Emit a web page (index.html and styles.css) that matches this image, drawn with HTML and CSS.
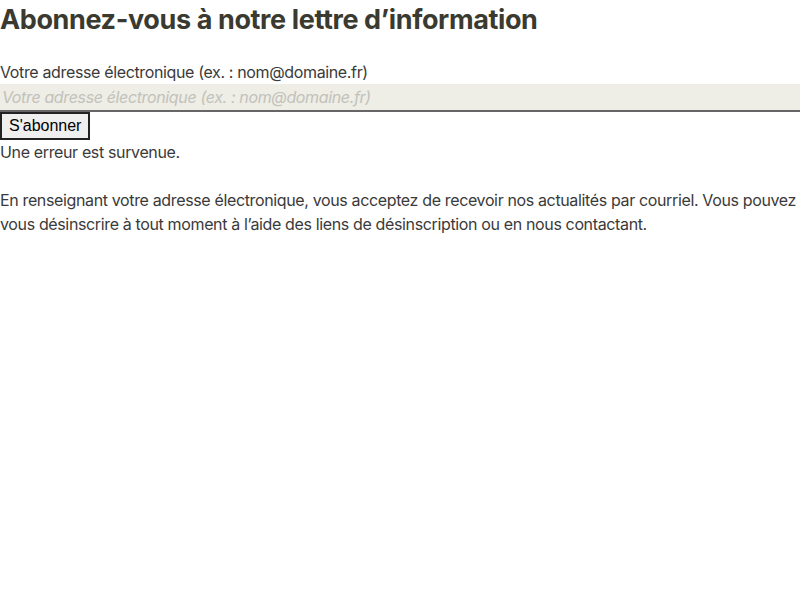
FILE: index.html
```html
<!DOCTYPE html>
<html lang="fr">
<head>
<meta charset="utf-8">
<title>Abonnez-vous</title>
<link rel="stylesheet" href="styles.css">
</head>
<body>
<form class="newsletter">
  <h1 class="title">Abonnez-vous à notre lettre d’information</h1>
  <label class="label" for="email">Votre adresse électronique (ex. : nom@domaine.fr)</label>
  <input class="field" id="email" type="email" placeholder="Votre adresse électronique (ex. : nom@domaine.fr)">
  <button class="submit" type="submit">S'abonner</button>
  <p class="error">Une erreur est survenue.</p>
  <p class="notice">En renseignant votre adresse électronique, vous acceptez de recevoir nos actualités par courriel. Vous pouvez vous désinscrire à tout moment à l’aide des liens de désinscription ou en nous contactant.</p>
</form>
</body>
</html>
```
FILE: styles.css
```css
html, body {
  margin: 0;
  padding: 0;
  background: #ffffff;
}
body {
  font-family: Inter, "Noto Sans", sans-serif;
  font-size: 16px;
  line-height: 24px;
  letter-spacing: -0.36px;
  color: #3a3a3a;
}
.newsletter {
  display: flex;
  flex-direction: column;
  align-items: flex-start;
}
.title {
  margin: 0 0 21px;
  font-size: 27px;
  line-height: 39px;
  font-weight: 700;
  letter-spacing: -0.38px;
  color: #3a3a30;
}
.label {
  display: block;
}
.field {
  box-sizing: border-box;
  width: 100%;
  height: 28px;
  margin: 0;
  padding: 0 2px;
  border: 0;
  border-bottom: 2px solid #666666;
  background: #eeede6;
  font-family: Inter, "Noto Sans", sans-serif;
  font-size: 16px;
  letter-spacing: -0.36px;
  color: #3a3a3a;
  outline: none;
}
.field::placeholder {
  font-style: italic;
  color: #c2c2ba;
}
.submit {
  margin: 0;
  padding: 0 7px;
  height: 28px;
  border: 2px solid #222222;
  background: #efefef;
  font-family: "Liberation Sans", Arial, sans-serif;
  font-size: 16px;
  line-height: 24px;
  color: #000000;
}
.error {
  margin: 0;
}
.notice {
  margin: 24px 0 0;
}
```
